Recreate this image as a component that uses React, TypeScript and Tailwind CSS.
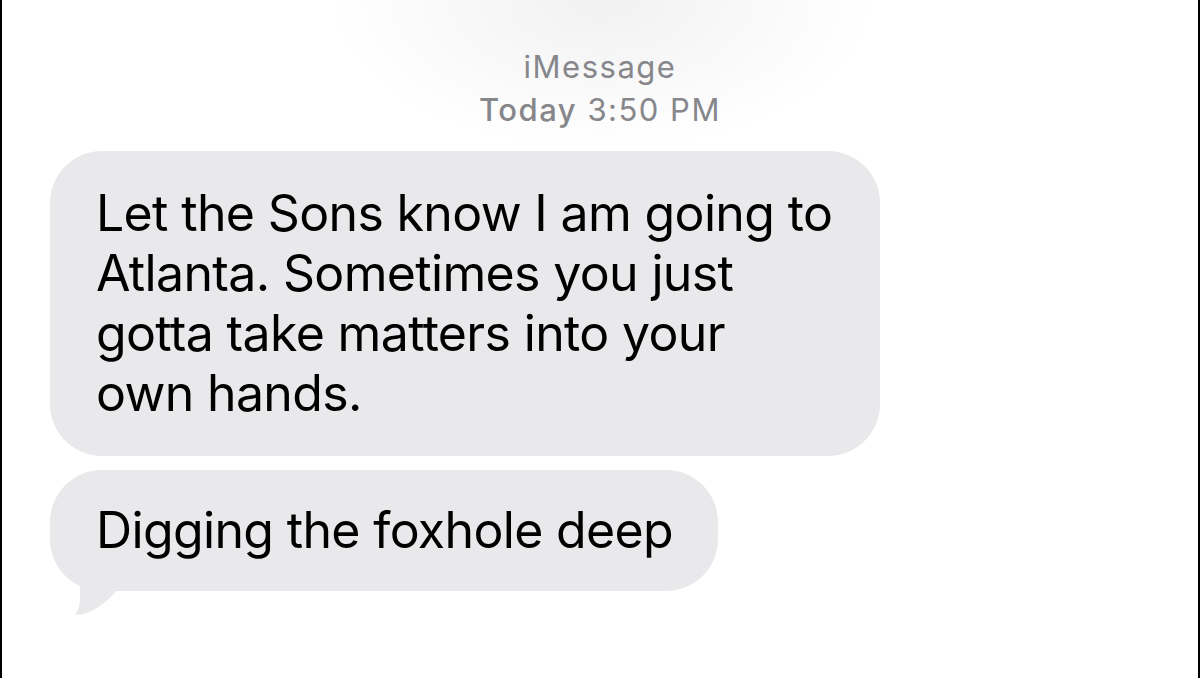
import React from 'react';

const font = { fontFamily: 'Inter, "Liberation Sans", sans-serif' };

const Tail = () => (
  <svg
    className="absolute left-[10px] top-[90px]"
    width="65"
    height="56"
    viewBox="0 0 65 56"
  >
    <path
      d="M20 0 L20 36 C20 45 18.5 50 16 52.5 C14.5 54 16 55 18.5 54.8 C33 53 46 43 56 31 L56 0 Z"
      fill="#e9e9eb"
    />
  </svg>
);

const App = () => {
  return (
    <div
      className="relative w-[1200px] h-[678px] overflow-hidden bg-white border-l-2 border-r-2 border-black"
      style={font}
    >
      {/* faint glow behind the header */}
      <div className="absolute left-[330px] top-[-150px] w-[540px] h-[300px] rounded-full bg-[radial-gradient(closest-side,#f1f1f1,#ffffff00)]" />

      <div className="relative flex flex-col">
        <div className="flex flex-col items-center pt-[45px] text-[31px] leading-[43px] tracking-[1.5px] text-[#86868b]">
          <span>iMessage</span>
          <span>
            <span className="font-medium">Today</span> 3:50 PM
          </span>
        </div>

        <div className="flex flex-col items-start gap-[14px] mt-[20px] pl-[48px] text-black text-[50px] leading-[60px] tracking-[-0.65px]">
          <div className="bg-[#e9e9eb] rounded-[52px] pt-[32px] pb-[33px] pl-[46px] pr-[48px]">
            Let the Sons know I am going to
            <br />
            Atlanta. Sometimes you just
            <br />
            gotta take matters into your
            <br />
            own hands.
          </div>
          <div className="relative bg-[#e9e9eb] rounded-[52px] pt-[30px] pb-[31px] pl-[46px] pr-[45px]">
            Digging the foxhole deep
            <Tail />
          </div>
        </div>
      </div>
    </div>
  );
};

export default App;
